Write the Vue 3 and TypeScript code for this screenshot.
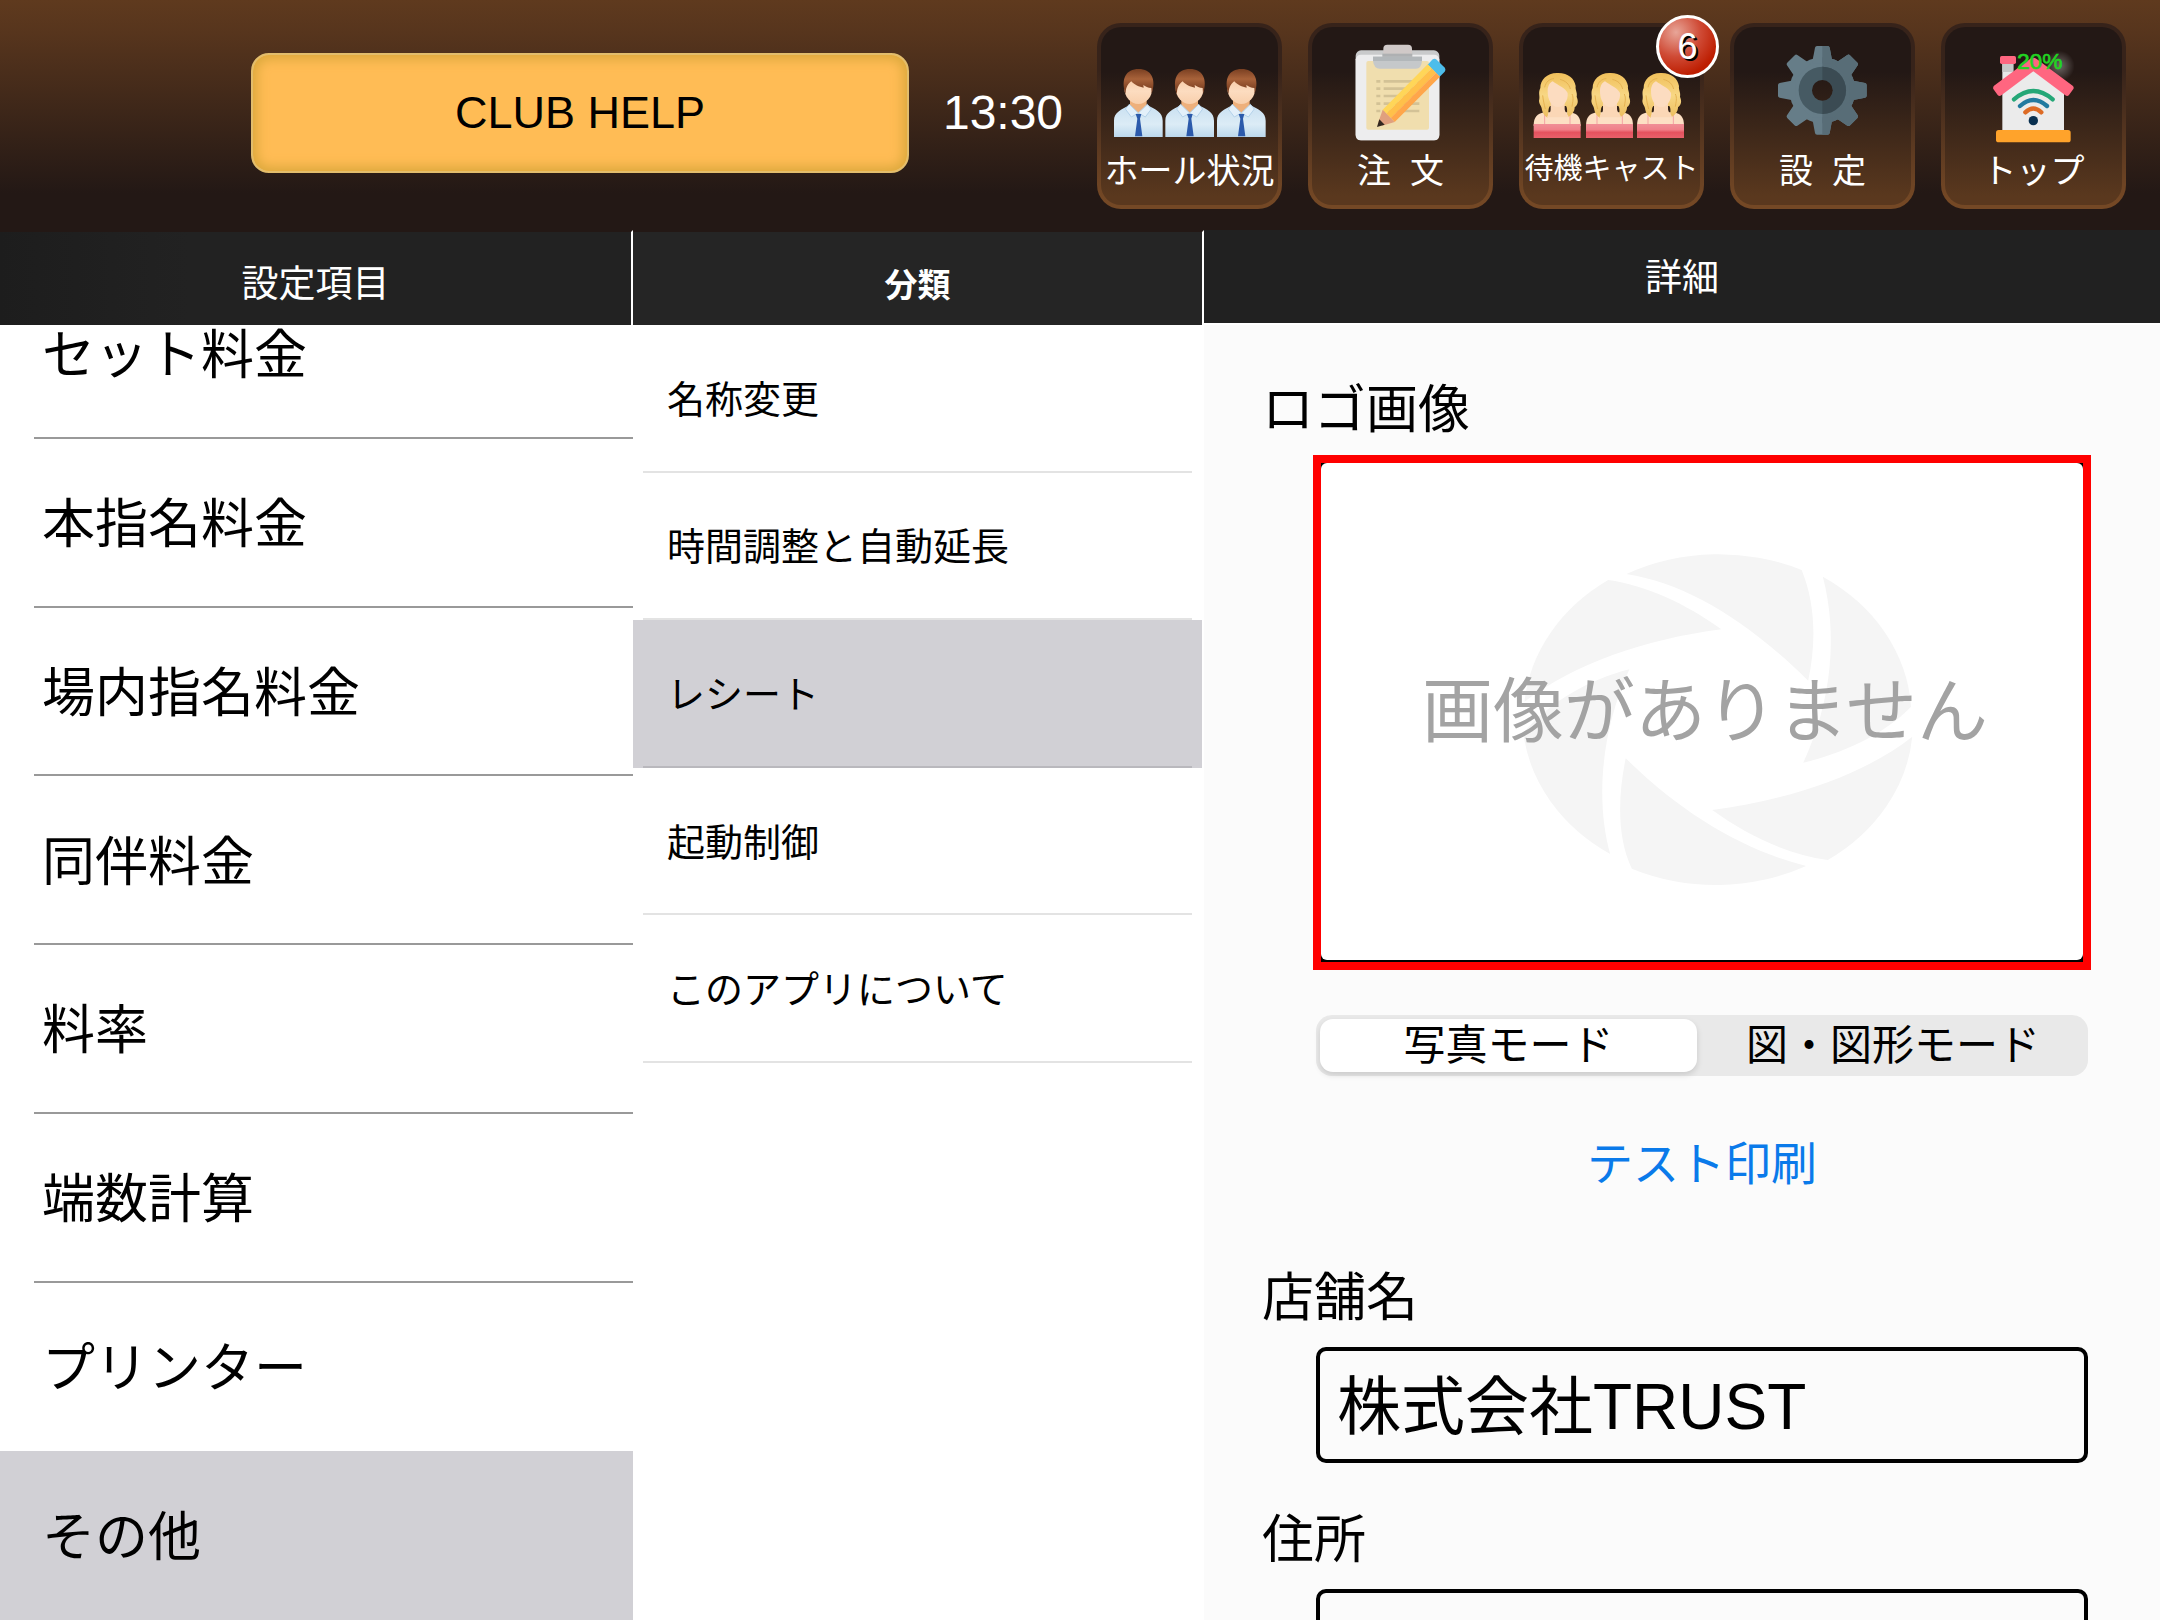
<script setup lang="ts">
import { ref } from 'vue'

const categories: string[] = [
  'セット料金',
  '本指名料金',
  '場内指名料金',
  '同伴料金',
  '料率',
  '端数計算',
  'プリンター',
  'その他',
]
const groups: string[] = ['名称変更', '時間調整と自動延長', 'レシート', '起動制御', 'このアプリについて']

const activeCategory = ref('その他')
const activeGroup = ref('レシート')
const mode = ref<'photo' | 'figure'>('photo')
const shopName = ref('株式会社TRUST')
const address = ref('')

const people: number[] = [0, 154, 309]
const women: number[] = [0, 157, 310]
const teeth: number[] = [0, 45, 90, 135, 180, 225, 270, 315]
</script>

<template>
  <div class="app">
    <header class="topbar">
      <button class="club" type="button">CLUB HELP</button>
      <time class="clock">13:30</time>
      <nav class="tiles">
        <button class="tile" type="button">
          <svg class="tile-icon" viewBox="63 81 531 366" aria-hidden="true">
            <defs>
              <linearGradient id="shirt" x1="0" y1="0" x2="0" y2="1">
                <stop offset="0" stop-color="#c9e0f1" />
                <stop offset="0.6" stop-color="#dcecf6" />
                <stop offset="1" stop-color="#bcd8ec" />
              </linearGradient>
              <linearGradient id="face" x1="0" y1="0" x2="0" y2="1">
                <stop offset="0" stop-color="#f6c49a" />
                <stop offset="0.6" stop-color="#fcdcc0" />
                <stop offset="1" stop-color="#f8cfac" />
              </linearGradient>
              <linearGradient id="hair" x1="0" y1="0" x2="0" y2="1">
                <stop offset="0" stop-color="#7a4022" />
                <stop offset="0.4" stop-color="#a8623a" />
                <stop offset="1" stop-color="#6b3318" />
              </linearGradient>
            </defs>
            <g v-for="x in people" :key="x" :transform="`translate(${x} 0)`">
              <path d="M102 411V362C102 338 124 328 148 316H202C228 328 248 338 248 362V411Z" fill="url(#shirt)" />
              <path d="M150 298H200V316L176 346L150 316Z" fill="#eeb07c" />
              <path d="M148 313L136 327L154 351L175 339Z" fill="#e3f0fa" stroke="#b4d2ea" stroke-width="3" />
              <path d="M202 313L214 327L196 351L175 339Z" fill="#e3f0fa" stroke="#b4d2ea" stroke-width="3" />
              <path d="M167 342H184L180 356L187 409H165L172 356Z" fill="#2c5aab" />
              <ellipse cx="175" cy="264" rx="42" ry="48" fill="url(#face)" />
              <path d="M136 282C122 236 138 207 176 207C213 207 230 236 215 282L214 264C204 264 196 259 190 255L191 263C178 261 162 254 154 244C146 250 138 260 137 276Z" fill="url(#hair)" />
            </g>
          </svg>
          <span class="tile-label">ホール状況</span>
        </button>

        <button class="tile" type="button">
          <svg class="tile-icon" viewBox="696 81 531 366" aria-hidden="true">
            <rect x="827" y="151" width="251" height="270" rx="16" fill="#c9cacb" />
            <path d="M827 178Q829 164 843 164H1062Q1076 164 1078 178V405Q1078 421 1062 421H843Q827 421 827 405Z" fill="#ededee" />
            <rect x="859" y="183" width="188" height="206" rx="6" fill="#f0deae" />
            <path d="M910 172V146Q910 134 922 134H984Q996 134 996 146V172Z" fill="#d0c9c8" />
            <rect x="907" y="161" width="90" height="10" fill="#aeb0b2" />
            <path d="M879 170H1026V183Q1024 206 1008 206H899Q882 206 879 183Z" fill="#c5c8ca" />
            <rect x="879" y="170" width="147" height="13" fill="#b2b7ba" />
            <g fill="#d3c296">
              <path d="M911 240h107v8H911zM911 262h107v8H911zM911 284h107v8H911zM911 307h107v8H911zM911 329h107v8H911z" />
              <path d="M889 240h12v8h-12zM889 262h12v8h-12zM889 284h12v8h-12zM889 307h12v8h-12zM889 329h12v8h-12z" />
            </g>
            <path d="M1043 194L1058 178Q1064 174 1070 179L1093 202Q1099 209 1094 215L1079 230Z" fill="#4dbdeb" />
            <path d="M908 329L1043 193L1055 205L919 341Z" fill="#ffd658" />
            <path d="M919 341L1055 205L1068 218L932 354Z" fill="#ffc04a" />
            <path d="M932 354L1068 218L1080 230L944 366Z" fill="#ffa64a" />
            <path d="M908 329L944 366L906 377L895 367Z" fill="#e0a07e" />
            <path d="M898 358L914 374L891 381Z" fill="#33271f" />
          </svg>
          <span class="tile-label">注&nbsp; 文</span>
        </button>

        <button class="tile" type="button">
          <svg class="tile-icon" viewBox="69 81 531 366" aria-hidden="true">
            <defs>
              <linearGradient id="dress" x1="0" y1="0" x2="0" y2="1">
                <stop offset="0" stop-color="#f08f97" />
                <stop offset="0.4" stop-color="#f08089" />
                <stop offset="0.6" stop-color="#e4525e" />
                <stop offset="1" stop-color="#e8606a" />
              </linearGradient>
              <linearGradient id="blonde" x1="0" y1="0" x2="0" y2="1">
                <stop offset="0" stop-color="#f0bf5a" />
                <stop offset="0.5" stop-color="#f8d784" />
                <stop offset="1" stop-color="#ecbd5e" />
              </linearGradient>
            </defs>
            <g v-for="x in women" :key="x" :transform="`translate(${x} 0)`">
              <path d="M101 378C101 350 112 342 132 337H212C232 342 242 350 242 378Z" fill="#fde0c4" />
              <path d="M134 340V374M210 340V374" stroke="#f4a3a4" stroke-width="3" />
              <path d="M101 372H242V414H101Z" fill="url(#dress)" />
              <path d="M175 219C142 217 121 239 121 264C114 279 120 286 118 297C114 310 124 316 125 325C127 340 136 350 142 353C148 342 142 328 150 318H198C205 328 198 342 204 352C216 345 224 334 224 322C238 310 233 299 230 290C233 278 225 270 227 258C223 235 205 220 175 219Z" fill="url(#blonde)" />
              <path d="M152 302H194V328C196 342 206 344 206 352H142C142 344 152 342 152 328Z" fill="#fbd7b6" />
              <path d="M143 270C144 257 150 247 158 244C174 256 196 264 203 279C205 302 191 321 174 321C155 321 142 300 143 270Z" fill="#fcdcc0" />
              <path d="M134 262C137 246 149 236 162 236M180 238C198 243 207 252 211 267M128 286C130 302 132 312 136 327M216 282C222 294 218 306 216 320" fill="none" stroke="#e6b352" stroke-width="3" />
            </g>
          </svg>
          <span class="tile-label small">待機キャスト</span>
          <span class="badge">6</span>
        </button>

        <button class="tile" type="button">
          <svg class="tile-icon" viewBox="42 81 531 366" aria-hidden="true">
            <defs>
              <clipPath id="right-half"><rect x="307" y="130" width="140" height="280" /></clipPath>
              <mask id="hub">
                <rect x="160" y="120" width="300" height="300" fill="#fff" />
                <circle cx="307" cy="271" r="31" fill="#000" />
              </mask>
              <g id="cog">
                <circle cx="307" cy="271" r="99" />
                <path v-for="a in teeth" :key="a" :transform="`rotate(${a} 307 271)`" d="M276 190L285 143Q286 138 291 138H323Q328 138 329 143L338 190Z" />
              </g>
            </defs>
            <g mask="url(#hub)">
              <use href="#cog" fill="#667d88" />
              <use href="#cog" fill="#586d77" clip-path="url(#right-half)" />
              <circle cx="307" cy="271" r="71" fill="#465a63" />
              <circle cx="307" cy="271" r="71" fill="#3b4b53" clip-path="url(#right-half)" />
            </g>
          </svg>
          <span class="tile-label">設&nbsp; 定</span>
        </button>

        <button class="tile" type="button">
          <svg class="tile-icon" viewBox="675 81 531 366" aria-hidden="true">
            <defs>
              <radialGradient id="glow">
                <stop offset="0" stop-color="#fff" stop-opacity="0.35" />
                <stop offset="1" stop-color="#fff" stop-opacity="0" />
              </radialGradient>
            </defs>
            <circle cx="1018" cy="198" r="46" fill="url(#glow)" />
            <rect x="847" y="185" width="33" height="70" fill="#e8e8e8" />
            <rect x="847" y="192" width="33" height="24" fill="#c8c8c8" />
            <rect x="840" y="168" width="48" height="24" rx="5" fill="#ff6680" />
            <path d="M847 272L940 205L1032 272V392H847Z" fill="#ebebeb" />
            <path d="M930 177Q940 170 950 177L1058 257Q1063 262 1060 267L1047 285Q1042 290 1036 286L940 214L844 286Q838 290 833 285L820 267Q818 262 822 257Z" fill="#ff6680" />
            <rect x="828" y="390" width="224" height="37" rx="8" fill="#ffa32b" />
            <g fill="none" stroke-width="13" stroke-linecap="round">
              <path d="M882 298Q940 248 998 298" stroke="#25a777" />
              <path d="M900 318Q940 282 981 318" stroke="#227aa0" />
              <path d="M916 337Q940 314 964 337" stroke="#dd6b25" />
            </g>
            <circle cx="940" cy="362" r="14" fill="#082f4f" />
            <text x="891" y="207" class="battery">20%</text>
          </svg>
          <span class="tile-label">トップ</span>
        </button>
      </nav>
    </header>

    <main class="columns">
      <section class="column">
        <h2 class="column-head first">設定項目</h2>
        <div class="scroller">
          <ul class="list categories">
            <li v-for="item in categories" :key="item">
              <button
                type="button"
                class="category"
                :class="{ selected: item === activeCategory }"
                @click="activeCategory = item"
              >{{ item }}</button>
            </li>
          </ul>
        </div>
      </section>

      <section class="column">
        <h2 class="column-head second">分類</h2>
        <div class="scroller">
          <ul class="list groups">
            <li v-for="item in groups" :key="item" :class="{ selected: item === activeGroup }">
              <button type="button" class="group" @click="activeGroup = item">{{ item }}</button>
            </li>
          </ul>
        </div>
      </section>

      <section class="column detail">
        <h2 class="column-head third">詳細</h2>
        <form class="form" @submit.prevent>
          <h3 class="field-label">ロゴ画像</h3>
          <button type="button" class="logo-frame">
            <span class="logo-inner">
              <svg class="shutter" viewBox="0 0 1568 1200" preserveAspectRatio="none" aria-hidden="true">
                <g fill="#f5f5f5">
                  <path d="M555 162A477 499 0 0 1 984 150C1018 250 1020 370 1000 482C850 300 700 190 555 162Z" />
                  <path d="M1036 170A477 499 0 0 1 1252 560C1180 650 1080 700 988 728C1060 540 1072 340 1036 170Z" />
                  <path d="M1255 650A477 499 0 0 1 1048 1020C950 1005 850 945 765 870C950 840 1130 770 1255 650Z" />
                  <path d="M995 1038A477 499 0 0 1 568 1046C530 950 535 820 553 715C690 880 840 990 995 1038Z" />
                  <path d="M515 1002A477 499 0 0 1 302 638C370 545 460 480 562 448C490 640 480 850 515 1002Z" />
                  <path d="M305 545A477 499 0 0 1 510 180C600 195 700 250 787 328C600 358 430 430 305 545Z" />
                </g>
              </svg>
              <span class="no-image">画像がありません</span>
            </span>
          </button>

          <div class="segments" role="radiogroup" aria-label="印刷モード">
            <label class="segment" :class="{ on: mode === 'photo' }">
              <input v-model="mode" type="radio" name="mode" value="photo" />写真モード
            </label>
            <label class="segment" :class="{ on: mode === 'figure' }">
              <input v-model="mode" type="radio" name="mode" value="figure" />図・図形モード
            </label>
          </div>

          <button type="button" class="test-print">テスト印刷</button>

          <label class="field-label" for="shop-name">店舗名</label>
          <input id="shop-name" v-model="shopName" class="text-input" type="text" />
          <label class="field-label" for="address">住所</label>
          <input id="address" v-model="address" class="text-input" type="text" />
        </form>
      </section>
    </main>
  </div>
</template>

<style>
body {
  margin: 0;
  overflow: hidden;
}
</style>

<style scoped>
.app {
  display: flex;
  flex-direction: column;
  height: 100vh;
  overflow: hidden;
  background: #fff;
  color: #000;
  font-family: "Liberation Sans", "Noto Sans CJK JP", sans-serif;
}
.app * {
  box-sizing: border-box;
}
button,
input {
  font-family: inherit;
  color: inherit;
}
button {
  margin: 0;
  padding: 0;
  border: 0;
  background: none;
  cursor: pointer;
}

/* top bar */
.topbar {
  display: flex;
  flex: none;
  align-items: center;
  height: 230px;
  padding: 2px 34px 0 251px;
  background: linear-gradient(#5f3a1e 0%, #57351d 14%, #231815 84%, #231815 100%);
}
.club {
  flex: 1;
  height: 120px;
  margin-bottom: 6px;
  border: 2px solid #e2bd6c;
  border-radius: 18px;
  background: #ffbc55;
  box-shadow: inset 0 0 12px 4px #dba83c;
  font-size: 45px;
}
.clock {
  width: 188px;
  margin-bottom: 8px;
  color: #fff;
  font-size: 48px;
  text-align: center;
}
.tiles {
  display: flex;
  gap: 26px;
}
.tile {
  position: relative;
  display: flex;
  flex-direction: column;
  align-items: center;
  width: 185px;
  height: 186px;
  border: 4px solid transparent;
  border-radius: 24px;
  background:
    linear-gradient(#231815 0%, #231815 25%, #5a381e 95%) padding-box,
    linear-gradient(#37231a 0%, #37231a 25%, #744825 95%) border-box;
}
.tile-icon {
  display: block;
  flex: none;
  width: 177px;
  height: 122px;
}
.tile-label {
  color: #fff;
  font-size: 34px;
  line-height: 44px;
  white-space: nowrap;
}
.tile-label.small {
  font-size: 29px;
  line-height: 40px;
}
.badge {
  position: absolute;
  top: -12px;
  right: -19px;
  width: 63px;
  height: 63px;
  border: 3px solid #fff;
  border-radius: 50%;
  background: radial-gradient(circle at 30% 25%, #e8a598 0%, #cf4a35 42%, #bd1d00 75%);
  color: #fff;
  font-size: 36px;
  line-height: 57px;
  text-align: center;
  text-shadow: 2px 2px 0 #000;
}
.battery {
  fill: #22d422;
  stroke: #22d422;
  stroke-width: 2;
  font-size: 68px;
}

/* three columns */
.columns {
  display: grid;
  flex: 1;
  grid-template-columns: 633fr 571fr 956fr;
  min-height: 0;
}
.column {
  display: flex;
  flex-direction: column;
  min-width: 0;
  min-height: 0;
}
.column-head {
  flex: none;
  height: 95px;
  margin: 0;
  border-top: 2px solid #231815;
  color: #fff;
  font-size: 37px;
  font-weight: 400;
  line-height: 106px;
  text-align: center;
}
.first {
  border-right: 2px solid #fff;
  background: linear-gradient(90deg, #1d1d1d, #222 30%);
}
.second {
  border-right: 2px solid #fff;
  background: #252525;
  font-size: 33px;
  font-weight: 700;
  line-height: 108px;
}
.third {
  border-top: 0;
  border-bottom: 2px solid #fff;
  background: #212121;
  line-height: 98px;
}
.scroller {
  flex: 1;
  min-height: 0;
  overflow: hidden;
}
.list {
  display: grid;
  grid-auto-rows: 1fr;
  margin: 0;
  padding: 0;
  list-style: none;
}
/* the list is scrolled to its end, so its first row is partly hidden */
.categories {
  height: 1350px;
  margin-top: -55px;
}
.category {
  width: 100%;
  height: 100%;
  padding: 0 0 6px 42px;
  background: linear-gradient(#999, #999) 34px 100% / 100% 2px no-repeat;
  font-size: 53px;
  text-align: left;
}
.category.selected,
.groups .selected {
  background: #d1d0d5;
}
.categories li:nth-last-child(2) .category {
  background: none;
}
.groups {
  height: 738px;
}
.groups li {
  margin-right: 2px;
  padding: 0 10px;
}
.group {
  width: 100%;
  height: 100%;
  padding: 0 0 3px 24px;
  border-bottom: 2px solid #e3e3e3;
  font-size: 38px;
  text-align: left;
}
.selected .group {
  border-color: #b9b8bd;
}

/* detail pane */
.detail {
  background: #fbfbfb;
}
.form {
  display: flex;
  flex: 1;
  flex-direction: column;
  min-height: 0;
  padding: 53px 72px 0 58px;
  overflow: hidden;
}
.form > * {
  flex: none;
}
.field-label {
  margin: 0;
  font-size: 52px;
  font-weight: 400;
  line-height: 64px;
}
.logo-frame {
  height: 515px;
  margin: 13px -3px 45px 51px;
  border: 8px solid #f00;
  background: #000;
}
.logo-inner {
  display: grid;
  place-items: center;
  height: 497px;
  margin-bottom: 2px;
  border-radius: 6px;
  background: #fff;
}
.shutter,
.no-image {
  grid-area: 1 / 1;
}
.shutter {
  width: 640px;
  height: 400px;
  margin: 16px 0 0 35px;
}
.no-image {
  z-index: 1;
  padding-left: 6px;
  color: #a3a3a3;
  font-size: 71px;
  line-height: 80px;
}
.segments {
  display: grid;
  grid-template-columns: 1fr 1fr;
  height: 61px;
  margin: 0 0 58px 54px;
  padding: 4px;
  border-radius: 16px;
  background: #e9e9e9;
}
.segment {
  border-radius: 13px;
  font-size: 42px;
  line-height: 53px;
  text-align: center;
}
.segment input {
  position: absolute;
  opacity: 0;
}
.segment.on {
  margin-right: 5px;
  background: #fff;
  box-shadow: 0 3px 6px #0002;
}
.test-print {
  align-self: center;
  margin: 0 0 72px 54px;
  color: #0a7aea;
  font-size: 46px;
  line-height: 60px;
}
.text-input {
  width: auto;
  height: 116px;
  margin: 17px 0 45px 54px;
  padding: 0 17px 8px;
  border: 4px solid #000;
  border-radius: 10px;
  background: transparent;
  font-size: 64px;
}
</style>
